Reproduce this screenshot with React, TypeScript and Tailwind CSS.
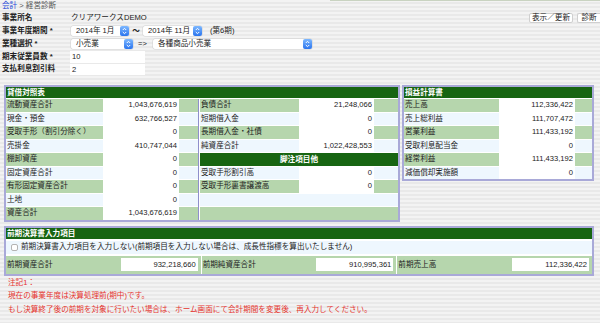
import React from "react";

type Item = { label?: string; value?: string; head?: boolean };

const font = "font-['Liberation_Sans','Noto_Sans_CJK_JP',sans-serif]";

function Arrow() {
  return (
    <div className="flex h-full w-[9px] shrink-0 items-center justify-center rounded-[2px] bg-[linear-gradient(#7db8ff,#2a74ee)]">
      <svg width="5" height="8" viewBox="0 0 5 8" fill="none" stroke="white" strokeWidth="1">
        <path d="M0.8 3 L2.5 1.3 L4.2 3" />
        <path d="M0.8 5 L2.5 6.7 L4.2 5" />
      </svg>
    </div>
  );
}

function Select({ text, w }: { text: string; w: string }) {
  return (
    <div className={`flex h-[10px] items-center rounded-[2px] bg-white shadow-[0_0_0_0.5px_#cfcfcf] ${w}`}>
      <span className="flex-1 pl-[5px] leading-[10px]">{text}</span>
      <Arrow />
    </div>
  );
}

function Row({ item, green, lw, vw }: { item: Item; green: boolean; lw: string; vw: string }) {
  if (item.head) {
    return (
      <div className="flex h-[12.5px] items-center justify-center bg-[#176512] font-bold text-white">
        {item.label}
      </div>
    );
  }
  return (
    <div className={`flex h-[12.5px] ${green ? "bg-[#b6d6ad]" : "bg-[#eef7fe]"}`}>
      <div className={`shrink-0 pl-px leading-[12.5px] ${lw}`}>{item.label}</div>
      {item.value !== undefined && (
        <div className={`shrink-0 bg-white pr-[2px] text-right leading-[12.5px] ${vw}`}>{item.value}</div>
      )}
    </div>
  );
}

function Header({ title }: { title: string }) {
  return <div className="h-[11px] bg-[#176512] pl-px font-bold leading-[11px] text-white">{title}</div>;
}

const assets: Item[] = [
  { label: "流動資産合計", value: "1,043,676,619" },
  { label: "現金・預金", value: "632,766,527" },
  { label: "受取手形（割引分除く）", value: "0" },
  { label: "売掛金", value: "410,747,044" },
  { label: "棚卸資産", value: "0" },
  { label: "固定資産合計", value: "0" },
  { label: "有形固定資産合計", value: "0" },
  { label: "土地", value: "0" },
  { label: "資産合計", value: "1,043,676,619" },
];

const liabilities: Item[] = [
  { label: "負債合計", value: "21,248,066" },
  { label: "短期借入金", value: "0" },
  { label: "長期借入金・社債", value: "0" },
  { label: "純資産合計", value: "1,022,428,553" },
  { label: "脚注項目他", head: true },
  { label: "受取手形割引高", value: "0" },
  { label: "受取手形裏書譲渡高", value: "0" },
  { label: "" },
  { label: "" },
];

const income: Item[] = [
  { label: "売上高", value: "112,336,422" },
  { label: "売上総利益", value: "111,707,472" },
  { label: "営業利益", value: "111,433,192" },
  { label: "受取利息配当金", value: "0" },
  { label: "経常利益", value: "111,433,192" },
  { label: "減価償却実施額", value: "0" },
];

const prev = [
  { label: "前期資産合計", value: "932,218,660" },
  { label: "前期純資産合計", value: "910,995,361" },
  { label: "前期売上高", value: "112,336,422" },
];

export default function App() {
  return (
    <div
      className={`relative h-[323px] w-[600px] overflow-hidden bg-[image:repeating-linear-gradient(to_bottom,#f3f3f3_0px,#f3f3f3_2px,#e9e9e9_2px,#e9e9e9_4px)] text-[7.6px] text-[#222] ${font}`}
    >
      <div className="absolute left-[330px] right-0 top-0 h-px bg-[#c9d3c1]" />

      {/* form area */}
      <div className="pl-[2px]">
        <div className="h-[11px] leading-[11px] text-[#555]">
          <span className="text-[#2346d8]">会計</span> &gt; 経営診断
        </div>
        <div className="flex h-[13px] items-center">
          <div className="w-[69px] shrink-0 font-bold">事業所名</div>
          <div>クリアワークスDEMO</div>
          <div className="ml-auto flex items-center gap-[4px]">
            <div className="flex h-[10px] w-[44px] items-center justify-center rounded-[2px] border border-[#cfcfcf] bg-white">表示／更新</div>
            <div className="flex h-[10px] w-[23px] items-center justify-center rounded-l-[2px] border border-r-0 border-[#cfcfcf] bg-white">診断</div>
          </div>
        </div>
        <div className="flex h-[13px] items-center">
          <div className="w-[69px] shrink-0 font-bold">事業年度期間 *</div>
          <Select text="2014年 1月" w="w-[58px]" />
          <div className="w-[14px] text-center font-bold">〜</div>
          <Select text="2014年 11月" w="w-[59px]" />
          <div className="pl-[8px]">(第6期)</div>
        </div>
        <div className="flex h-[13px] items-center">
          <div className="w-[69px] shrink-0 font-bold">業種選択 *</div>
          <Select text="小売業" w="w-[62px]" />
          <div className="w-[20px] pl-[5px]">=&gt;</div>
          <Select text="各種商品小売業" w="w-[159px]" />
        </div>
        <div className="flex h-[13px] items-center">
          <div className="w-[68px] shrink-0 font-bold">期末従業員数 *</div>
          <div className="h-[12px] w-[75px] bg-white pl-[2px] leading-[12px]">10</div>
        </div>
        <div className="flex h-[12px] items-center">
          <div className="w-[68px] shrink-0 font-bold">支払利息割引料</div>
          <div className="h-[11px] w-[75px] bg-white pl-[2px] leading-[11px]">2</div>
        </div>
      </div>

      {/* statements */}
      <div className="mt-[10px] flex items-start gap-[2px] px-[4px]">
        <div className="w-[396px] border-2 border-[#a9a9d8] bg-white">
          <Header title="貸借対照表" />
          <div className="mt-px flex">
            <div className="flex w-[192px] flex-col gap-px">
              {assets.map((a, i) => (
                <Row key={i} item={a} green={i % 2 === 0} lw="w-[97px]" vw="w-[76px]" />
              ))}
            </div>
            <div className="mr-px w-px bg-[#8f8fcc]" />
            <div className="flex flex-1 flex-col gap-px">
              {liabilities.map((a, i) => (
                <Row key={i} item={a} green={i % 2 === 0} lw="w-[99px]" vw="w-[75px]" />
              ))}
            </div>
          </div>
        </div>

        <div className="w-[192px] border-2 border-[#a9a9d8] bg-white">
          <Header title="損益計算書" />
          <div className="mt-px flex flex-col gap-px">
            {income.map((a, i) => (
              <Row key={i} item={a} green={i % 2 === 0} lw="w-[95px]" vw="w-[76px]" />
            ))}
          </div>
        </div>
      </div>

      {/* previous period */}
      <div className="mx-[4px] mt-[4px] w-[590px] border-2 border-[#a9a9d8] bg-white">
        <Header title="前期決算書入力項目" />
        <div className="mt-[2px] flex h-[13px] items-center bg-[#eef7fe] pl-[5px]">
          <div className="mr-[3px] h-[7px] w-[7px] rounded-[2px] border border-[#b4b4b4] bg-white" />
          前期決算書入力項目を入力しない(前期項目を入力しない場合は、成長性指標を算出いたしません)
        </div>
        <div className="mt-[2px] grid h-[18px] grid-cols-3 gap-px">
          {prev.map((p) => (
            <div key={p.label} className="flex items-center bg-[#b6d6ad] pr-[3px]">
              <div className="flex-1 pl-px">{p.label}</div>
              <div className="h-[13px] w-[77px] bg-white pr-[2px] text-right leading-[13px]">{p.value}</div>
            </div>
          ))}
        </div>
      </div>

      {/* notes */}
      <div className="pl-[8px] leading-[13.5px] text-[#e5342e]">
        <div>注記1：</div>
        <div>現在の事業年度は決算処理前(期中)です。</div>
        <div>もし決算終了後の前期を対象に行いたい場合は、ホーム画面にて会計期間を変更後、再入力してください。</div>
      </div>
    </div>
  );
}
